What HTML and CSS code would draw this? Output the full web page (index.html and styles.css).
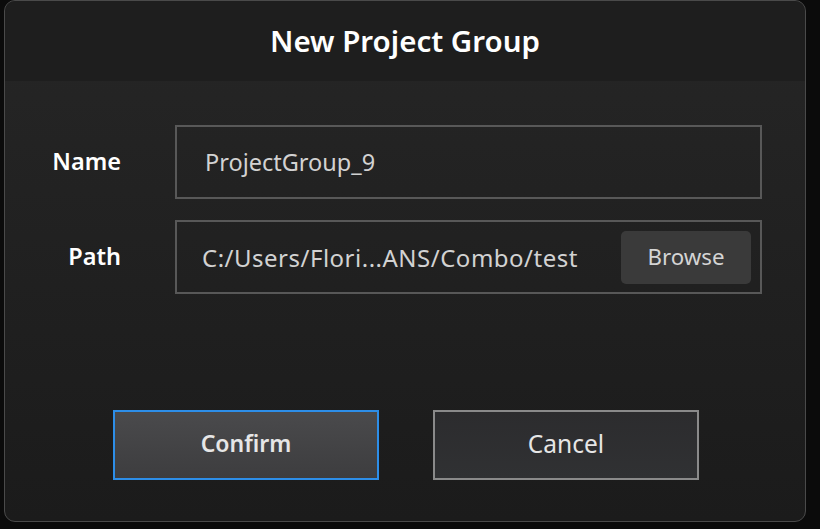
FILE: index.html
```html
<!DOCTYPE html>
<html>
<head>
<meta charset="utf-8">
<link rel="stylesheet" href="styles.css">
</head>
<body>
<div class="dialog">
  <div class="header">New Project Group</div>
  <div class="content">
    <div class="form">
      <div class="label">Name</div>
      <div class="field"><span class="value name-value">ProjectGroup_9</span></div>
      <div class="label">Path</div>
      <div class="field path-field"><span class="value path-value">C:/Users/Flori...ANS/Combo/test</span><span class="browse">Browse</span></div>
    </div>
    <div class="actions">
      <div class="btn confirm">Confirm</div>
      <div class="btn cancel">Cancel</div>
    </div>
  </div>
</div>
</body>
</html>
```

FILE: styles.css
```css
* { box-sizing: border-box; }
html, body { margin: 0; padding: 0; }
body {
  background: #0b0b0b;
  width: 820px;
  height: 529px;
  overflow: hidden;
  font-family: "Noto Sans", "Open Sans", sans-serif;
}
.dialog {
  margin-left: 4px;
  width: 802px;
  height: 522px;
  border: 1.5px solid #4a4a4a;
  border-radius: 11px;
  overflow: hidden;
  display: flex;
  flex-direction: column;
  background: linear-gradient(#262626, #1b1b1b);
}
.header {
  height: 80px;
  flex: none;
  background: #1e1e1e;
  color: #ffffff;
  font-weight: 600;
  font-size: 29.5px;
  display: flex;
  align-items: center;
  justify-content: center;
  padding-bottom: 2px;
}
.content {
  flex: 1;
  padding: 44px 43px 0 0;
  display: flex;
  flex-direction: column;
}
.form {
  display: grid;
  grid-template-columns: 116px 1fr;
  column-gap: 54px;
  row-gap: 21px;
}
.label {
  color: #ffffff;
  font-weight: 600;
  font-size: 23.5px;
  text-align: right;
  align-self: center;
  padding-bottom: 2px;
}
.field {
  height: 74px;
  border: 2px solid #585858;
  display: flex;
  align-items: center;
  padding-left: 28px;
  padding-right: 9px;
}
.path-field { padding-left: 25px; }
.value {
  color: #d2d2d2;
  font-size: 23.5px;
  flex: 1;
}
.path-value {
  font-size: 24px;
  letter-spacing: 0.5px;
}
.browse {
  width: 130px;
  height: 53px;
  background: #3a3a3a;
  border-radius: 5px;
  color: #d4d4d4;
  font-size: 22.3px;
  display: flex;
  align-items: center;
  justify-content: center;
  padding-bottom: 2px;
}
.actions {
  display: flex;
  gap: 54px;
  margin-top: 116px;
  padding-left: 108px;
}
.btn {
  width: 266px;
  height: 70px;
  display: flex;
  align-items: center;
  justify-content: center;
  color: #e6e6e6;
  padding-bottom: 4px;
}
.confirm {
  border: 2px solid #2d8ee8;
  background: linear-gradient(#4a4a4c, #3d3d3f);
  font-weight: 600;
  font-size: 23px;
}
.cancel {
  border: 2px solid #8a8a8a;
  background: linear-gradient(#2c2c2e, #303133);
  font-size: 24.5px;
}
```
